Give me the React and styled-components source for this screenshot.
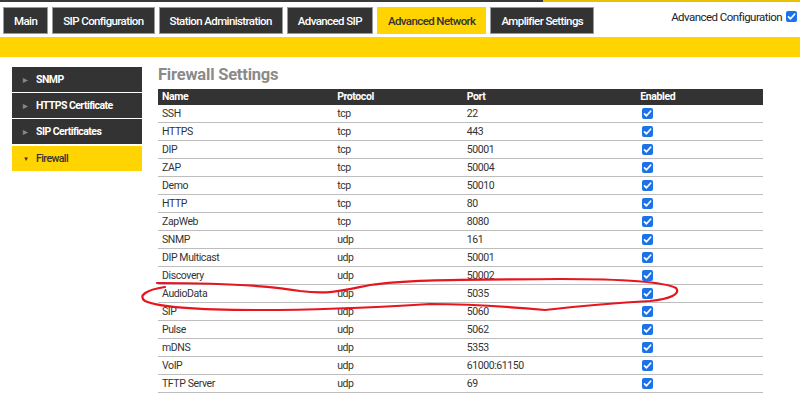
import React from "react";
import styled, { createGlobalStyle } from "styled-components";

const Global = createGlobalStyle`
  html, body { margin: 0; padding: 0; background: #fff; }
  body {
    font-family: "Roboto", "Liberation Sans", sans-serif;
    color: #333;
    width: 800px;
    height: 398px;
    overflow: hidden;
  }
`;

const Page = styled.div`
  position: relative;
  width: 800px;
  height: 398px;
`;

const TopLine = styled.div`
  display: flex;
  height: 2px;
`;
const TopSeg = styled.div`
  width: ${(p) => p.$w || "auto"};
  flex: ${(p) => (p.$w ? "none" : "1")};
  background: ${(p) => p.$c};
`;

const Header = styled.div`
  display: flex;
  justify-content: space-between;
  align-items: flex-start;
  padding: 5px 3px 0 3px;
`;

const Tabs = styled.nav`
  display: flex;
  gap: 4px;
`;

const Tab = styled.div`
  height: 27px;
  box-sizing: border-box;
  padding: 0 10px;
  display: flex;
  align-items: center;
  background: ${(p) => (p.$active ? "#ffd400" : "#333")};
  color: ${(p) => (p.$active ? "#333" : "#fff")};
  border: 1px solid ${(p) => (p.$active ? "#ffd400" : "#9a9a9a")};
  font-size: 11.5px;
  letter-spacing: -0.6px;
  font-weight: 500;
  white-space: nowrap;
`;

const AdvConfig = styled.label`
  display: flex;
  align-items: center;
  gap: 4px;
  font-size: 11.5px;
  letter-spacing: -0.55px;
  color: #222;
  margin-top: 3px;
`;

const YellowBar = styled.div`
  height: 20px;
  margin-top: 3px;
  background: #ffd400;
`;

const Body = styled.div`
  display: flex;
  padding: 10px 0 0 12px;
  gap: 16px;
`;

const Sidebar = styled.ul`
  list-style: none;
  margin: 0;
  padding: 0;
  width: 130px;
  display: flex;
  flex-direction: column;
  gap: 1px;
`;

const SideItem = styled.li`
  height: 25px;
  display: flex;
  align-items: center;
  background: ${(p) => (p.$active ? "#ffd400" : "#333")};
  color: ${(p) => (p.$active ? "#333" : "#fff")};
  font-size: 10.5px;
  letter-spacing: -0.55px;
  font-weight: ${(p) => (p.$active ? 500 : 700)};
  padding-left: 11px;
  margin-top: ${(p) => (p.$active ? "1px" : "0")};
`;

const Arrow = styled.span`
  width: 13px;
  font-size: 6px;
  color: ${(p) => (p.$active ? "#333" : "#888")};
`;

const Content = styled.div`
  width: 605px;
`;

const Title = styled.h2`
  margin: 0 0 6px 0;
  font-size: 16.5px;
  letter-spacing: -0.2px;
  font-weight: 700;
  color: #8a8a8a;
  line-height: 16px;
`;

const Table = styled.table`
  width: 605px;
  border-collapse: collapse;
  font-size: 10.5px;
  letter-spacing: -0.4px;
`;

const Th = styled.th`
  background: #333;
  color: #fff;
  text-align: left;
  font-weight: 700;
  height: 16px;
  padding: 0 0 0 4px;
  width: ${(p) => p.$w}px;
  line-height: 16px;
`;

const Td = styled.td`
  height: 17px;
  padding: 0 0 0 ${(p) => p.$pl || 4}px;
  border-bottom: 1px solid #bdbdbd;
  color: #333;
  line-height: 17px;
  vertical-align: middle;
`;

const Check = styled.span`
  display: inline-block;
  width: 11px;
  height: 11px;
  border-radius: 2px;
  background: #1a73e8;
  vertical-align: middle;
  position: relative;
  top: -1px;
  svg { display: block; }
`;

const Annotation = styled.svg`
  position: absolute;
  left: 0;
  top: 0;
  pointer-events: none;
`;

const CheckBox = () => (
  <Check>
    <svg width="11" height="11" viewBox="0 0 11 11">
      <path d="M2.5 5.8 L4.5 7.8 L8.6 3.2" stroke="#fff" strokeWidth="1.7" fill="none" strokeLinecap="round" strokeLinejoin="round" />
    </svg>
  </Check>
);

const rows = [
  ["SSH", "tcp", "22"],
  ["HTTPS", "tcp", "443"],
  ["DIP", "tcp", "50001"],
  ["ZAP", "tcp", "50004"],
  ["Demo", "tcp", "50010"],
  ["HTTP", "tcp", "80"],
  ["ZapWeb", "tcp", "8080"],
  ["SNMP", "udp", "161"],
  ["DIP Multicast", "udp", "50001"],
  ["Discovery", "udp", "50002"],
  ["AudioData", "udp", "5035"],
  ["SIP", "udp", "5060"],
  ["Pulse", "udp", "5062"],
  ["mDNS", "udp", "5353"],
  ["VoIP", "udp", "61000:61150"],
  ["TFTP Server", "udp", "69"],
];

const tabs = [
  "Main",
  "SIP Configuration",
  "Station Administration",
  "Advanced SIP",
  "Advanced Network",
  "Amplifier Settings",
];

const side = ["SNMP", "HTTPS Certificate", "SIP Certificates", "Firewall"];

export default function App() {
  return (
    <Page>
      <Global />
      <TopLine>
        <TopSeg $w="543px" $c="#3a3a3a" />
        <TopSeg $c="#e8c200" />
      </TopLine>
      <Header>
        <Tabs>
          {tabs.map((t) => (
            <Tab key={t} $active={t === "Advanced Network"}>
              {t}
            </Tab>
          ))}
        </Tabs>
        <AdvConfig>
          Advanced Configuration <CheckBox />
        </AdvConfig>
      </Header>
      <YellowBar />
      <Body>
        <Sidebar>
          {side.map((s) => (
            <SideItem key={s} $active={s === "Firewall"}>
              <Arrow $active={s === "Firewall"}>{s === "Firewall" ? "▼" : "▶"}</Arrow>
              {s}
            </SideItem>
          ))}
        </Sidebar>
        <Content>
          <Title>Firewall Settings</Title>
          <Table>
            <thead>
              <tr>
                <Th $w={176}>Name</Th>
                <Th $w={129}>Protocol</Th>
                <Th $w={174}>Port</Th>
                <Th $w={126}>Enabled</Th>
              </tr>
            </thead>
            <tbody>
              {rows.map(([n, p, port]) => (
                <tr key={n}>
                  <Td>{n}</Td>
                  <Td>{p}</Td>
                  <Td>{port}</Td>
                  <Td $pl={6}>
                    <CheckBox />
                  </Td>
                </tr>
              ))}
            </tbody>
          </Table>
        </Content>
      </Body>
      <Annotation width="800" height="398" viewBox="0 0 800 398">
        <path
          d="M157 283 C200 283, 260 284, 300 291 C330 295, 345 290, 370 285 C410 279, 470 280, 560 279 C620 279, 662 281, 676 288 C681 294, 670 299, 650 301 C610 303, 580 306, 545 310 C500 306, 470 304, 430 304 C380 307, 330 310, 260 310 C200 310, 160 308, 145 301 C138 296, 145 290, 165 287"
          stroke="#e8141e"
          strokeWidth="2.2"
          fill="none"
          strokeLinecap="round"
        />
      </Annotation>
    </Page>
  );
}
